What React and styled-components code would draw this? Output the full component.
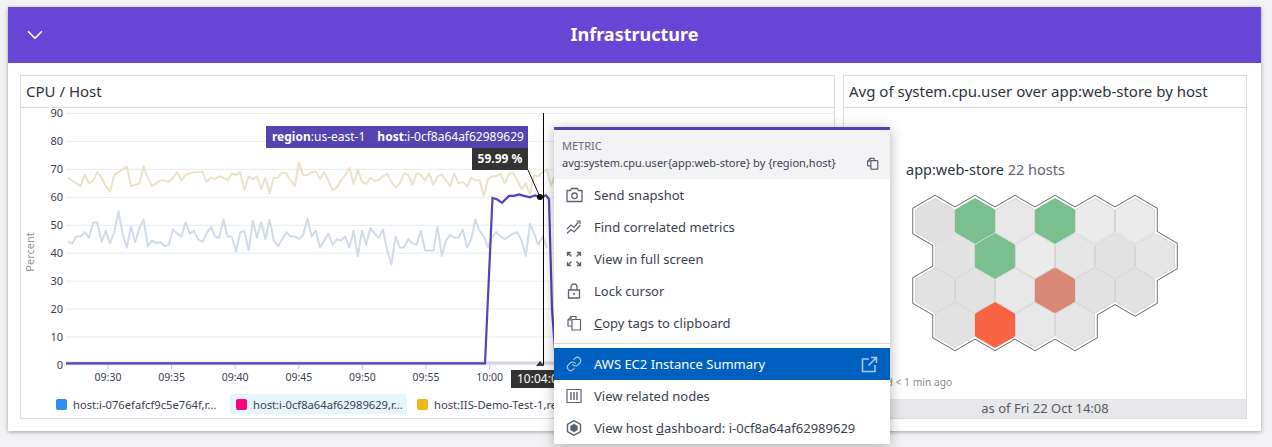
import React from 'react'
import styled, { createGlobalStyle } from 'styled-components'
import { ChevronDown, Link as LinkIcon } from 'lucide-react'

const GlobalStyle = createGlobalStyle`
html, body {
  margin: 0;
  height: 447px;
  overflow: hidden;
  background: #f3f2f5;
  font-family: "Noto Sans", "Open Sans", sans-serif;
}
`

const Page = styled.div`
position: relative;
height: 447px;
overflow: hidden;
padding: 7px 11px 0 8px;
box-sizing: border-box;
`

const Card = styled.div`
background: #fff;
height: 424px;
box-shadow: 0 1px 4px rgba(0, 0, 0, 0.35);
display: flex;
flex-direction: column;
`

const Header = styled.div`
height: 56px;
box-sizing: border-box;
padding-bottom: 2px;
background: #6745d5;
color: #fff;
display: flex;
align-items: center;
justify-content: center;
position: relative;
font-size: 18px;
font-weight: 700;
`

const Chevron = styled.span`
position: absolute;
left: 14px;
top: 15px;
display: flex;
`

const Body = styled.div`
flex: 1;
display: grid;
grid-template-columns: 815px 404px;
gap: 8px;
padding: 12px 14px 12px 12px;
min-height: 0;
`

const Widget = styled.div`
border: 1px solid #dcdcde;
display: flex;
flex-direction: column;
min-width: 0;
overflow: hidden;
`

const WidgetTitle = styled.div`
height: 31px;
flex: none;
border-bottom: 1px solid #dcdcde;
font-size: 15px;
line-height: 31px;
padding-left: 5px;
color: #2c3340;
white-space: nowrap;
`

const ChartArea = styled.div`
position: relative;
flex: 1;
min-height: 0;
`

const PlotSvg = styled.svg`
display: block;
overflow: visible;
font-family: "Noto Sans", sans-serif;
`

const SeriesTip = styled.div`
position: absolute;
left: 245px;
top: 18px;
width: 262px;
height: 22px;
box-sizing: border-box;
background: #5544b0;
color: #fff;
font-size: 12px;
line-height: 22px;
padding-left: 6px;
white-space: nowrap;
b {
  font-weight: 700;
}
span {
  margin-left: 12px;
}
`

const ValueTip = styled.div`
position: absolute;
left: 451px;
top: 40px;
width: 56px;
height: 22px;
background: #333;
color: #fff;
font-size: 12px;
font-weight: 700;
line-height: 22px;
text-align: center;
`

const TimeTip = styled.div`
position: absolute;
left: 490px;
top: 262px;
width: 70px;
height: 18px;
background: #333;
color: #fff;
font-size: 12px;
line-height: 18px;
padding-left: 6px;
box-sizing: border-box;
white-space: nowrap;
`

const Legend = styled.div`
position: absolute;
left: 29px;
top: 286px;
display: flex;
height: 20px;
white-space: nowrap;
`

const LegendItem = styled.div`
display: flex;
align-items: center;
gap: 6px;
height: 20px;
width: ${(props) => props.width}px;
padding-left: 6px;
box-sizing: border-box;
border-radius: 3px;
background: ${(props) => (props.active ? '#e6f4fb' : 'transparent')};
font-size: 11.2px;
color: #3a4150;
margin-right: 4px;
`

const Swatch = styled.span`
width: 11px;
height: 11px;
flex: none;
border-radius: 2px;
background: ${(props) => props.color};
`

const MapArea = styled.div`
position: relative;
flex: 1;
min-height: 0;
display: flex;
flex-direction: column;
`

const MapTitle = styled.div`
padding: 51px 0 0 62px;
font-size: 14.5px;
line-height: 20px;
color: #2c3340;
span {
  color: #5f6672;
}
`

const HexSvg = styled.svg`
display: block;
margin-top: 10px;
`

const Updated = styled.div`
margin-top: auto;
padding: 0 0 9px 7px;
font-size: 10.3px;
line-height: 15px;
color: #888c94;
`

const AsOf = styled.div`
height: 19px;
flex: none;
background: #e8e8ea;
color: #555b66;
font-size: 13px;
line-height: 19px;
text-align: center;
`

const Menu = styled.div`
position: absolute;
left: 554px;
top: 127px;
width: 336px;
background: #fff;
border-top: 3px solid #5544b0;
box-shadow: 0 2px 12px rgba(0, 0, 0, 0.3);
`

const MenuHead = styled.div`
height: 49px;
background: #f3f2f5;
box-sizing: border-box;
padding: 8px 8px 0;
position: relative;
`

const MetricLabel = styled.div`
font-size: 11px;
line-height: 16px;
color: #666c78;
`

const MetricQuery = styled.div`
font-size: 11px;
line-height: 18px;
color: #3a4150;
white-space: nowrap;
`

const CopyButton = styled.span`
position: absolute;
right: 11px;
top: 27px;
display: flex;
color: #3a4150;
`

const MenuItem = styled.div`
height: 32px;
display: flex;
align-items: center;
padding: 0 12px 0 10px;
font-size: 13px;
white-space: nowrap;
background: ${(props) => (props.active ? '#0060bf' : 'transparent')};
color: ${(props) => (props.active ? '#fff' : '#3a4150')};
`

const ItemIcon = styled.span`
width: 20px;
margin-right: 10px;
display: flex;
justify-content: center;
color: ${(props) => (props.active ? '#b5d0ee' : '#5c6370')};
`

const ItemEnd = styled.span`
margin-left: auto;
display: flex;
color: #a9c9ec;
`

const Divider = styled.div`
height: 1px;
background: #dcdcde;
margin: 4px 0;
`

const CopyIcon = ({ size = 16 }) => (
  <svg width={size} height={size} viewBox="0 0 16 16" fill="none" stroke="currentColor" strokeWidth="1.2">
    <path d="M6 4.500h8.500V15H6z" />
    <path d="M6 11H2V5l3-3.500h5v3" />
    <path d="M2 5h3V1.500" />
  </svg>
)

const CameraIcon = () => (
  <svg width="17" height="16" viewBox="0 0 17 16" fill="none" stroke="currentColor" strokeWidth="1.300">
    <path d="M1 3.500h3.500l1-2h6l1 2H16v11H1z" strokeLinejoin="round" />
    <circle cx="8.500" cy="8.800" r="2.800" />
  </svg>
)

const LockIcon = () => (
  <svg width="16" height="16" viewBox="0 0 16 16" fill="none" stroke="currentColor" strokeWidth="1.300">
    <path d="M2.500 7h11v8h-11z" />
    <path d="M5 7V4a3 3 0 016 0v3" />
    <circle cx="8" cy="11" r="1.100" fill="currentColor" stroke="none" />
  </svg>
)

const OutIcon = () => (
  <svg width="17" height="17" viewBox="0 0 17 17" fill="none" stroke="currentColor" strokeWidth="1.500">
    <path d="M8 3H1.500v12.500H14V9" />
    <path d="M10 1.500h5.500V7M15.500 1.500L7.500 9.500" />
  </svg>
)

const TrendIcon = () => (
  <svg width="16" height="16" viewBox="0 0 16 16" fill="none" stroke="currentColor" strokeWidth="1.200">
    <path d="M1 10l4-4 3 2.500 4.500-5.500" />
    <path d="M1 14.500l4-4 3 2.500 6.500-7" />
    <path d="M10.500 2h3.500v3" />
  </svg>
)

const ExpandIcon = () => (
  <svg width="16" height="16" viewBox="0 0 16 16" fill="none" stroke="currentColor" strokeWidth="1.400">
    <path d="M1.500 5V1.500H5M2 2l3.500 3.500" />
    <path d="M14.500 5V1.500H11M14 2l-3.500 3.500" />
    <path d="M1.500 11v3.500H5M2 14l3.500-3.500" />
    <path d="M14.500 11v3.500H11M14 14l-3.500-3.500" />
  </svg>
)

const NodesIcon = () => (
  <svg width="16" height="16" viewBox="0 0 16 16" fill="none" stroke="currentColor" strokeWidth="1.200">
    <path d="M1 1.500h14v13H1z" />
    <path d="M5 4v8M8 4v8M11 4v8" strokeWidth="1.400" />
  </svg>
)

const HostIcon = () => (
  <svg width="16" height="16" viewBox="0 0 16 16">
    <path d="M8 .7l6.500 3.700v7.200L8 15.300 1.500 11.600V4.400z" fill="none" stroke="currentColor" strokeWidth="1.400" />
    <path d="M8 3.800l3.700 2.100v4.200L8 12.200l-3.700-2.100V5.900z" fill="currentColor" />
  </svg>
)

const TAN = [67, 66, 65, 64, 68, 65, 66, 69, 67, 64, 62, 68, 69, 70, 71, 64, 64.500, 65, 71, 67, 64, 65, 66, 66, 65.500, 67, 69, 66, 68, 68.500, 69, 69, 69.200, 65.500, 67, 66.500, 67.500, 67, 66, 68.500, 68, 69, 62.500, 67.500, 66.500, 67.500, 63, 67, 61.500, 67, 67, 69, 68.500, 66, 64, 72.500, 68, 68, 69, 69.200, 66.500, 69, 66, 62.500, 63.500, 66, 68, 70.500, 64.800, 69.800, 65.500, 64.800, 67, 65.800, 66.200, 67.500, 68.500, 65.500, 63.500, 65, 68.500, 68, 64.500, 68.500, 68, 66, 68.500, 64.500, 67.500, 68.200, 66, 64, 68.500, 65, 65.500, 63.800, 67, 66, 66.200, 60.500, 66.500, 67.500, 67.500, 68.500, 65, 68.500, 68.700, 66, 63, 65, 61, 68, 67.500, 69, 70, 64, 68, 67.500, 66.500, 65.500, 66, 67, 65, 64, 66]
const BLUE = [44, 43.500, 46, 46, 47.500, 45.500, 51, 51, 44, 48, 43.500, 47.500, 55, 47, 42, 49.500, 44, 49, 52, 42.500, 44.500, 43.500, 44, 42.500, 43, 48.500, 47, 46, 51, 47, 48, 45, 44, 47, 49.500, 46, 45.500, 52, 46, 46, 40.500, 47.500, 48, 41, 51.500, 45.500, 51, 45, 52, 44.500, 42.500, 45, 47.500, 46, 46, 45, 46.500, 52.500, 46, 48, 42, 44.500, 47, 43, 45, 44.500, 46, 42, 48, 39, 48, 43, 49, 47, 45.500, 48.500, 41, 36, 46, 42, 42, 45, 43.500, 43, 48, 41, 41, 41, 49.500, 39, 44.500, 46.500, 45.500, 45.500, 48.500, 42, 45, 52, 48, 46, 42, 46, 47.500, 46, 45, 46, 47, 47.500, 44.500, 39, 50.500, 47, 43, 46, 42]
const PURPLE = [[66, 0.6], [485, 0.6], [492.500, 59.800], [497, 59.300], [502, 58], [509, 60.500], [514, 60.500], [519, 61], [524, 60.500], [530, 60], [535, 60.700], [541, 60], [546, 60.700], [549, 59.300], [552, 20], [556, 0.6]]

const toY = (value) => 365 - value * 2.795
const toPoints = (values, start, step) =>
  values.map((value, i) => `${start + i * step},${toY(value)}`).join(' ')

const GRID = [90, 80, 70, 60, 50, 40, 30, 20, 10, 0]
const TICKS = ['09:30', '09:35', '09:40', '09:45', '09:50', '09:55', '10:00']

const Plot = () => (
  <PlotSvg width="813" height="285" viewBox="21 108 813 285">
    <text x="30" y="248" fontSize="11" fill="#8d939c" textAnchor="middle" transform="rotate(-90 34 248)">Percent</text>
    {GRID.map((value) => (
      <g key={value}>
        <line x1="66" x2="834" y1={toY(value)} y2={toY(value)} stroke="#eaebed" strokeWidth="1" />
        <text x="63" y={toY(value) + 4} fontSize="11" fill="#3a4150" textAnchor="end">{value}</text>
      </g>
    ))}
    {TICKS.map((tick, i) => (
      <g key={tick}>
        <line x1={108 + i * 63.6} x2={108 + i * 63.6} y1="365" y2="369" stroke="#c9cbd0" />
        <text x={108 + i * 63.6} y="381" fontSize="10.500" fill="#3a4150" textAnchor="middle">{tick}</text>
      </g>
    ))}
    <polyline points={toPoints(TAN, 68, 4.2)} fill="none" stroke="#ece2cc" strokeWidth="2" strokeLinejoin="round" />
    <polyline points={toPoints(BLUE, 68, 4.2)} fill="none" stroke="#d0dbe9" strokeWidth="2" strokeLinejoin="round" />
    <line x1="66" x2="556" y1="363" y2="363" stroke="#d4d5e2" strokeWidth="3" />
    <polyline points={PURPLE.map(([x, value]) => `${x},${toY(value)}`).join(' ')} fill="none" stroke="#5544b8" strokeWidth="2.200" />
    <line x1="543.500" x2="543.500" y1="113" y2="365" stroke="#000" strokeWidth="1" />
    <line x1="528" y1="170" x2="540" y2="197" stroke="#111" strokeWidth="1" />
    <circle cx="540" cy="197" r="3" fill="#000" />
    <path d="M536 366l4-5 4 5z" fill="#333" />
  </PlotSvg>
)

const hexPoints = (cx, cy, r) =>
  [0, 1, 2, 3, 4, 5]
    .map((i) => {
      const a = (Math.PI / 3) * i - Math.PI / 2
      return `${(cx + r * Math.cos(a)).toFixed(1)},${(cy + r * Math.sin(a)).toFixed(1)}`
    })
    .join(' ')

const HEX_ROWS = [
  { y: 217, x: 935, fills: ['#e0e0e0', '#7abf8e', '#e8e8e8', '#7abf8e', '#ececec', '#ececec'] },
  { y: 252, x: 955, fills: ['#e2e2e2', '#7abf8e', '#ececec', '#e6e6e6', '#e2e2e2', '#e6e6e6'] },
  { y: 286.500, x: 935, fills: ['#e2e2e2', '#e2e2e2', '#e8e8e8', '#d88874', '#e2e2e2', '#e2e2e2'] },
  { y: 321, x: 955, fills: ['#e2e2e2', '#f86443', '#e8e8e8', '#e6e6e6'] },
]
const HEXES = HEX_ROWS.flatMap((row) =>
  row.fills.map((fill, i) => ({ x: row.x + i * 40, y: row.y, fill })),
)
const isGrey = (fill) => fill[1] === fill[3] && fill[3] === fill[5]

const HostMap = () => (
  <HexSvg width="402" height="165" viewBox="844 185 402 165">
    {HEXES.map((hex) => (
      <polygon key={`o${hex.x}-${hex.y}`} points={hexPoints(hex.x, hex.y, 26.200)} fill="#666" />
    ))}
    {HEXES.map((hex) => (
      <polygon key={`w${hex.x}-${hex.y}`} points={hexPoints(hex.x, hex.y, 25.200)} fill="#fff" />
    ))}
    {HEXES.map((hex) => (
      <polygon
        key={`h${hex.x}-${hex.y}`}
        points={hexPoints(hex.x, hex.y, 22.500)}
        fill={hex.fill}
        stroke={isGrey(hex.fill) ? '#d6d6d6' : hex.fill}
        strokeWidth="1"
      />
    ))}
  </HexSvg>
)

export default function App() {
  return (
    <Page>
      <GlobalStyle />
      <Card>
        <Header>
          <Chevron><ChevronDown size={26} strokeWidth={1.6} /></Chevron>
          Infrastructure
        </Header>
        <Body>
          <Widget>
            <WidgetTitle>CPU / Host</WidgetTitle>
            <ChartArea>
              <Plot />
              <SeriesTip><b>region</b>:us-east-1<span><b>host</b>:i-0cf8a64af62989629</span></SeriesTip>
              <ValueTip>59.99 %</ValueTip>
              <TimeTip>10:04:00</TimeTip>
              <Legend>
                <LegendItem width={176}><Swatch color="#2f8fee" />host:i-076efafcf9c5e764f,r...</LegendItem>
                <LegendItem width={177} active><Swatch color="#ff0080" />host:i-0cf8a64af62989629,r...</LegendItem>
                <LegendItem width={170}><Swatch color="#f0b71f" />host:IIS-Demo-Test-1,region...</LegendItem>
              </Legend>
            </ChartArea>
          </Widget>
          <Widget>
            <WidgetTitle>Avg of system.cpu.user over app:web-store by host</WidgetTitle>
            <MapArea>
              <MapTitle>app:web-store <span>22 hosts</span></MapTitle>
              <HostMap />
              <Updated>Updated &lt; 1 min ago</Updated>
              <AsOf>as of Fri 22 Oct 14:08</AsOf>
            </MapArea>
          </Widget>
        </Body>
      </Card>
      <Menu>
        <MenuHead>
          <MetricLabel>METRIC</MetricLabel>
          <MetricQuery>avg:system.cpu.user{'{'}app:web-store{'}'} by {'{'}region,host{'}'}</MetricQuery>
          <CopyButton><CopyIcon size={13} /></CopyButton>
        </MenuHead>
        <MenuItem><ItemIcon><CameraIcon /></ItemIcon>Send snapshot</MenuItem>
        <MenuItem><ItemIcon><TrendIcon /></ItemIcon>Find correlated metrics</MenuItem>
        <MenuItem><ItemIcon><ExpandIcon /></ItemIcon>View in full screen</MenuItem>
        <MenuItem><ItemIcon><LockIcon /></ItemIcon>Lock cursor</MenuItem>
        <MenuItem><ItemIcon><CopyIcon /></ItemIcon><span><u>C</u>opy tags to clipboard</span></MenuItem>
        <Divider />
        <MenuItem active>
          <ItemIcon active><LinkIcon size={16} strokeWidth={1.6} /></ItemIcon>
          AWS EC2 Instance Summary
          <ItemEnd><OutIcon /></ItemEnd>
        </MenuItem>
        <MenuItem><ItemIcon><NodesIcon /></ItemIcon>View related nodes</MenuItem>
        <MenuItem><ItemIcon><HostIcon /></ItemIcon><span>View host <u>d</u>ashboard: i-0cf8a64af62989629</span></MenuItem>
      </Menu>
    </Page>
  )
}
